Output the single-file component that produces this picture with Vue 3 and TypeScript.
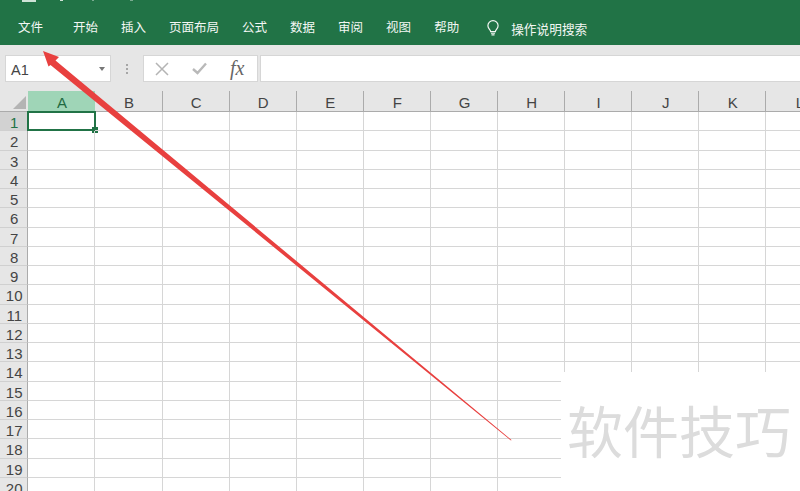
<template>
  <div class="window">
    <!-- Ribbon tabs -->
    <header class="ribbon">
      <div class="title-bits">
        <span class="bit save"></span>
        <span class="bit undo"></span>
        <span class="bit redo"></span>
        <span class="bit more"></span>
      </div>
      <nav class="tabs">
        <span v-for="tab in tabs" :key="tab" class="tab">{{ tab }}</span>
        <span class="search">
          <svg class="bulb" width="14" height="17" viewBox="0 0 16 20" fill="none" stroke="#f4f8f5" stroke-width="1.4">
            <path d="M5.2 13.6 C5 11.4 2 10.2 2 6.8 A6 6 0 0 1 14 6.8 C14 10.2 11 11.4 10.8 13.6 Z" />
            <path d="M5.6 15.6 H10.4 M6.2 17.6 H9.8" />
          </svg>
          <span class="search-text">操作说明搜索</span>
        </span>
      </nav>
    </header>

    <!-- Name box and formula bar -->
    <section class="formula-row">
      <div class="name-box">
        <span class="name-text">A1</span>
        <i class="caret"></i>
      </div>
      <div class="grip"><i></i><i></i><i></i></div>
      <div class="fx-buttons">
        <svg width="14" height="14" viewBox="0 0 14 14" fill="none" stroke="#b4b4b4" stroke-width="1.5">
          <path d="M1 1 L13 13 M13 1 L1 13" />
        </svg>
        <svg width="15" height="13" viewBox="0 0 15 13" fill="none" stroke="#b9b9b9" stroke-width="2.4">
          <path d="M1 7 L5.5 11 L14 1.5" />
        </svg>
        <span class="fx">fx</span>
      </div>
      <div class="formula-input"></div>
    </section>

    <!-- Sheet -->
    <main class="sheet">
      <div class="corner"><i></i></div>
      <div
        v-for="col in columns"
        :key="col"
        class="col-head"
        :class="{ active: col === 'A' }"
      >{{ col }}</div>
      <template v-for="row in rows" :key="row">
        <div class="row-head" :class="{ active: row === 1 }">{{ row }}</div>
        <div
          v-for="col in columns"
          :key="col + row"
          class="cell"
        >
          <div v-if="col === 'A' && row === 1" class="selection"><i></i></div>
        </div>
      </template>
    </main>

    <div class="watermark">软件技巧</div>

    <!-- Red annotation arrow -->
    <svg class="arrow" width="800" height="491" viewBox="0 0 800 491">
      <polygon
        points="43,51 59,57 55.5,60.5 511.5,440 511,440.6 50.5,65 48.5,66.5"
        fill="#e8403f"
      />
    </svg>
  </div>
</template>

<script setup lang="ts">
const tabs: string[] = ['文件', '开始', '插入', '页面布局', '公式', '数据', '审阅', '视图', '帮助']
const columns: string[] = ['A', 'B', 'C', 'D', 'E', 'F', 'G', 'H', 'I', 'J', 'K', 'L']
const rows: number[] = Array.from({ length: 20 }, (_, i) => i + 1)
</script>

<style>
html,
body {
  margin: 0;
  background: #fff;
}
</style>

<style scoped>
.window {
  position: relative;
  width: 800px;
  height: 491px;
  overflow: hidden;
  background: #fff;
  font-family: "Liberation Sans", "Noto Sans CJK SC", sans-serif;
}

.ribbon {
  position: relative;
  height: 45px;
  background: #217346;
  box-sizing: border-box;
  padding-left: 18px;
  display: flex;
  align-items: center;
}

.title-bits .bit {
  position: absolute;
  top: 0;
  height: 1px;
  background: #cfe3d7;
}
.bit.save { left: 22px; width: 14px; height: 2px; }
.bit.undo { left: 60px; width: 3px; }
.bit.redo { left: 92px; width: 2px; opacity: 0.5; }
.bit.more { left: 130px; width: 3px; opacity: 0.5; }

.tabs {
  display: flex;
  align-items: center;
  gap: 23px;
  margin-top: 11px;
  font-size: 12.5px;
  color: #f3f7f4;
}

.tab {
  line-height: 18px;
}
.tab:first-child {
  margin-right: 7px;
}

.search {
  display: flex;
  align-items: center;
  margin-left: 4px;
}
.bulb {
  margin-right: 11px;
}
.search-text {
  font-size: 12.7px;
}

.formula-row {
  height: 46px;
  box-sizing: border-box;
  padding: 10px 0 9px 5px;
  background: #e6e6e6;
  display: flex;
  align-items: stretch;
}

.name-box {
  width: 106px;
  background: #fff;
  border: 1px solid #d6d6d6;
  box-sizing: border-box;
  display: flex;
  align-items: center;
  justify-content: space-between;
  padding: 0 5px;
  color: #444;
}
.name-text {
  font-size: 14.5px;
  margin-top: 2px;
}
.caret {
  width: 0;
  height: 0;
  border-left: 3.5px solid transparent;
  border-right: 3.5px solid transparent;
  border-top: 4px solid #777;
}

.grip {
  width: 32px;
  display: flex;
  flex-direction: column;
  align-items: center;
  justify-content: center;
  gap: 2px;
}
.grip i {
  width: 2px;
  height: 2px;
  background: #a6a6a6;
}

.fx-buttons {
  width: 115px;
  background: #fff;
  border: 1px solid #d6d6d6;
  box-sizing: border-box;
  display: flex;
  align-items: center;
  gap: 23px;
  padding-left: 11px;
}
.fx {
  font-family: "Liberation Serif", serif;
  font-style: italic;
  font-size: 20px;
  color: #666;
}

.formula-input {
  flex: 1;
  margin-left: 2px;
  background: #fff;
  border: 1px solid #d6d6d6;
  border-right: 0;
}

.sheet {
  display: grid;
  grid-template-columns: 28.4px repeat(12, 67.1px);
  grid-template-rows: 21px repeat(20, 19.26px);
  background: #fff;
}

.corner {
  background: #e6e6e6;
  border-bottom: 1px solid #ababab;
  position: relative;
}
.corner i {
  position: absolute;
  right: 2px;
  bottom: 2px;
  width: 0;
  height: 0;
  border-left: 13px solid transparent;
  border-bottom: 13px solid #b4b4b4;
}

.col-head {
  background: #e6e6e6;
  border-bottom: 1px solid #ababab;
  border-right: 1px solid #ababab;
  box-sizing: border-box;
  text-align: center;
  font-size: 15px;
  line-height: 23px;
  color: #444;
  padding-left: 1px;
}
.col-head.active {
  background: #9fd5b7;
  border-right-color: #9fd5b7;
  border-bottom: 1px solid #217346;
  color: #1f6b42;
}

.row-head {
  background: #e6e6e6;
  border-right: 1px solid #ababab;
  border-bottom: 1px solid #d0d0d0;
  box-sizing: border-box;
  text-align: center;
  font-size: 15px;
  line-height: 21px;
  color: #444;
  padding-left: 1px;
}
.row-head.active {
  background: #d2d2d2;
  color: #217346;
}

.cell {
  position: relative;
  border-right: 1px solid #d6d6d6;
  border-bottom: 1px solid #d6d6d6;
  box-sizing: border-box;
}

.selection {
  position: absolute;
  left: -1px;
  top: -1px;
  right: -2px;
  bottom: -1px;
  border: 2px solid #217346;
  box-sizing: border-box;
}
.selection i {
  position: absolute;
  right: -4px;
  bottom: -4px;
  width: 6px;
  height: 6px;
  background: #217346;
}

.watermark {
  position: absolute;
  left: 561px;
  top: 372px;
  width: 239px;
  height: 119px;
  box-sizing: border-box;
  padding: 25px 0 0 6px;
  background: #fff;
  color: #dcdcdc;
  font-family: "Noto Sans CJK SC", sans-serif;
  font-size: 56px;
  line-height: 64px;
  white-space: nowrap;
}

.arrow {
  position: absolute;
  left: 0;
  top: 0;
  pointer-events: none;
}
</style>
